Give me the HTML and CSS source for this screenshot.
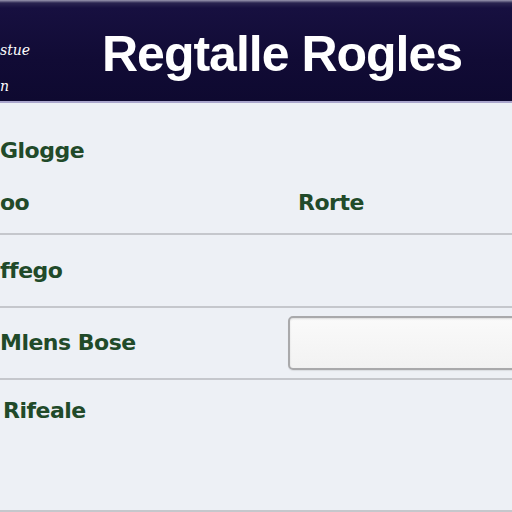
FILE: index.html
```html
<!DOCTYPE html>
<html>
<head>
<meta charset="utf-8">
<link rel="stylesheet" href="styles.css">
</head>
<body>
<div class="page">
  <header class="header">
    <div class="side">
      <span class="side-top">stue</span>
      <span class="side-bottom">n</span>
    </div>
    <h1 class="title">Regtalle Rogles</h1>
  </header>
  <section class="row row-first">
    <div class="label">Glogge</div>
    <div class="label second">oo</div>
    <div class="label right">Rorte</div>
  </section>
  <section class="row row-mid">
    <div class="label">ffego</div>
  </section>
  <section class="row row-input">
    <div class="label label-col">Mlens Bose</div>
    <div class="field"></div>
  </section>
  <section class="row row-last">
    <div class="label">Rifeale</div>
  </section>
</div>
</body>
</html>
```

FILE: styles.css
```css
html, body {
  margin: 0;
  padding: 0;
}
body {
  width: 512px;
  height: 512px;
  overflow: hidden;
  background: #edf0f5;
}
.page {
  display: flex;
  flex-direction: column;
  width: 512px;
  height: 512px;
  overflow: hidden;
}
.header {
  height: 101px;
  display: flex;
  align-items: stretch;
  background: linear-gradient(to bottom, #9a98b0 0px, #2a2450 3px, #171040 8px, #110b35 60px, #0e0930 100%);
  border-bottom: 2px solid #aaa6cc;
  box-sizing: content-box;
}
.side {
  width: 40px;
  display: flex;
  flex-direction: column;
  padding-top: 42px;
  gap: 20px;
  color: #ffffff;
  font-family: "DejaVu Serif", serif;
  font-style: italic;
  font-size: 14px;
  line-height: 16px;
}
.title {
  margin: 0 0 0 62px;
  padding-top: 27px;
  color: #ffffff;
  font-family: "Liberation Sans", Arial, sans-serif;
  font-weight: 700;
  font-size: 50px;
  line-height: 54px;
  letter-spacing: -1px;
}
.row {
  border-bottom: 2px solid #c5c7cc;
  box-shadow: 0 1px 0 #dfe1e6;
  background: #edf0f5;
}
.label {
  color: #214a29;
  font-family: "DejaVu Sans", sans-serif;
  font-weight: 700;
  font-size: 22px;
  line-height: 26px;
  letter-spacing: -0.5px;
}
.row-first {
  height: 95px;
  padding-top: 35px;
  display: grid;
  grid-template-columns: 298px 1fr;
  grid-template-rows: 26px 26px;
  row-gap: 26px;
}
.row-first .second {
  grid-row: 2;
  grid-column: 1;
}
.row-first .right {
  grid-row: 2;
  grid-column: 2;
}
.row-mid {
  height: 71px;
  display: flex;
  align-items: center;
}
.row-input {
  height: 70px;
  display: flex;
  align-items: center;
}
.label-col {
  width: 288px;
  flex: none;
}
.field {
  flex: none;
  width: 240px;
  height: 50px;
  background: linear-gradient(to bottom, #fafafa, #f2f2f2);
  border: 2px solid #a9a9ab;
  border-radius: 5px;
  box-shadow: inset 0 1px 2px rgba(0,0,0,0.12), 0 1px 1px rgba(0,0,0,0.08);
}
.row-last {
  flex: 1;
  padding-top: 18px;
  padding-left: 3px;
}
```
